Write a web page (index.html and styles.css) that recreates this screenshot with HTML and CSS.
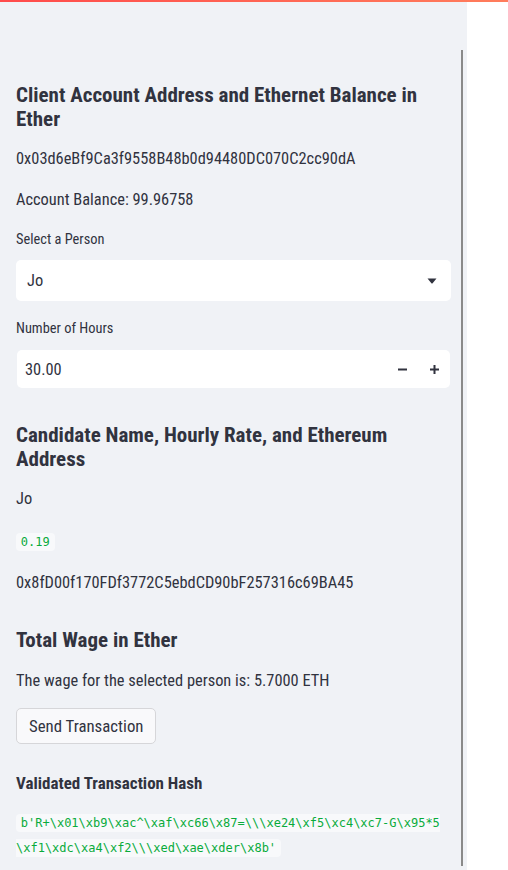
FILE: index.html
```html
<!DOCTYPE html>
<html lang="en">
<head>
<meta charset="utf-8">
<title>Payroll dApp</title>
<link rel="stylesheet" href="styles.css">
</head>
<body>
<div class="decoration"></div>
<div class="app">
  <aside class="sidebar">
    <div class="sidebar-content">
      <h3 class="heading">Client Account Address and Ethernet Balance in Ether</h3>
      <p class="text mt-16">0x03d6eBf9Ca3f9558B48b0d94480DC070C2cc90dA</p>
      <p class="text mt-17">Account Balance: 99.96758</p>

      <label class="field-label mt-18">Select a Person</label>
      <div class="select mt-10">
        <span class="select-value">Jo</span>
        <svg class="caret" width="10" height="6" viewBox="0 0 10 6"><path d="M0.5 0.5 H9.5 L5.6 5.2 Q5 5.8 4.4 5.2 Z" fill="#31333F"/></svg>
      </div>

      <label class="field-label mt-18">Number of Hours</label>
      <div class="number mt-11">
        <span class="number-value">30.00</span>
        <div class="steps">
          <span class="step"><svg width="9" height="9" viewBox="0 0 9 9"><rect x="0" y="3.5" width="9" height="2" fill="#31333F"/></svg></span>
          <span class="step"><svg width="9" height="9" viewBox="0 0 9 9"><rect x="0" y="3.5" width="9" height="2" fill="#31333F"/><rect x="3.5" y="0" width="2" height="9" fill="#31333F"/></svg></span>
        </div>
      </div>

      <h3 class="heading mt-35">Candidate Name, Hourly Rate, and Ethereum Address</h3>
      <p class="text mt-16">Jo</p>
      <p class="text mt-18"><code class="code">0.19</code></p>
      <p class="text mt-17">0x8fD00f170FDf3772C5ebdCD90bF257316c69BA45</p>

      <h3 class="heading mt-33">Total Wage in Ether</h3>
      <p class="text mt-17">The wage for the selected person is: 5.7000 ETH</p>
      <button class="button mt-15">Send Transaction</button>

      <h4 class="subheading mt-27">Validated Transaction Hash</h4>
      <p class="text mt-15"><code class="code code-wrap">b'R+\x01\xb9\xac^\xaf\xc66\x87=\\\xe24\xf5\xc4\xc7-G\x95*5<wbr>\xf1\xdc\xa4\xf2\\\xed\xae\xder\x8b'</code></p>
    </div>
    <div class="scroll-thumb"></div>
  </aside>
  <main class="main"></main>
</div>
</body>
</html>
```

FILE: styles.css
```css
* { box-sizing: border-box; }

html, body {
  margin: 0;
  padding: 0;
  height: 870px;
  overflow: hidden;
  background: #ffffff;
  font-family: "Roboto Condensed", "Lato", "Liberation Sans", sans-serif;
  color: #31333F;
}

.decoration {
  height: 2px;
  background: linear-gradient(90deg, #ff4b4b 0%, #ff7d5c 100%);
}

.app {
  display: flex;
  height: 868px;
}

.sidebar {
  position: relative;
  width: 467px;
  flex: 0 0 467px;
  background: #f0f2f6;
}

.sidebar-content {
  display: flex;
  flex-direction: column;
  align-items: flex-start;
  padding: 81px 16px 0 16px;
}

.main {
  flex: 1;
  background: #ffffff;
}

.heading {
  margin: 0;
  font-size: 21px;
  line-height: 24px;
  font-weight: 700;
  width: 100%;
}

.subheading {
  margin: 0;
  font-size: 17px;
  line-height: 24px;
  font-weight: 700;
}

.text {
  margin: 0;
  font-size: 16.4px;
  line-height: 24px;
  width: 100%;
}

.field-label {
  display: block;
  font-size: 14.4px;
  line-height: 20px;
}

.mt-10 { margin-top: 10px; }
.mt-11 { margin-top: 11px; }
.mt-15 { margin-top: 15px; }
.mt-16 { margin-top: 16px; }
.mt-17 { margin-top: 17px; }
.mt-18 { margin-top: 18px; }
.mt-27 { margin-top: 27px; }
.mt-33 { margin-top: 33px; }
.mt-35 { margin-top: 35px; }

.select {
  width: 100%;
  height: 41px;
  background: #ffffff;
  border-radius: 5px;
  display: flex;
  align-items: center;
  justify-content: space-between;
  padding: 0 14px 0 11px;
  font-size: 16.4px;
}

.caret { display: block; }

.number {
  align-self: stretch;
  margin-left: 1px;
  margin-right: 1px;
  height: 38px;
  background: #ffffff;
  border-radius: 5px;
  display: flex;
  align-items: center;
  justify-content: space-between;
  padding-left: 8px;
  font-size: 16.4px;
}

.steps {
  display: flex;
  height: 100%;
}

.step {
  width: 32px;
  display: flex;
  align-items: center;
  justify-content: center;
}

.step svg { display: block; }

.code {
  font-family: "DejaVu Sans Mono", "Liberation Mono", monospace;
  font-size: 12px;
  color: #09ab3b;
  background: #f8f9fb;
  padding: 2.4px 4.8px;
  border-radius: 4px;
}

.code-wrap {
  overflow-wrap: break-word;
  word-break: normal;
}

.button {
  height: 36px;
  padding: 0 12px;
  font-family: inherit;
  font-size: 16.8px;
  color: #31333F;
  background: #f9f9fb;
  border: 1px solid #d6d6d9;
  border-radius: 5px;
}

.scroll-thumb {
  position: absolute;
  left: 461px;
  top: 48px;
  width: 2px;
  height: 816px;
  background: #8a8a8a;
}
```
